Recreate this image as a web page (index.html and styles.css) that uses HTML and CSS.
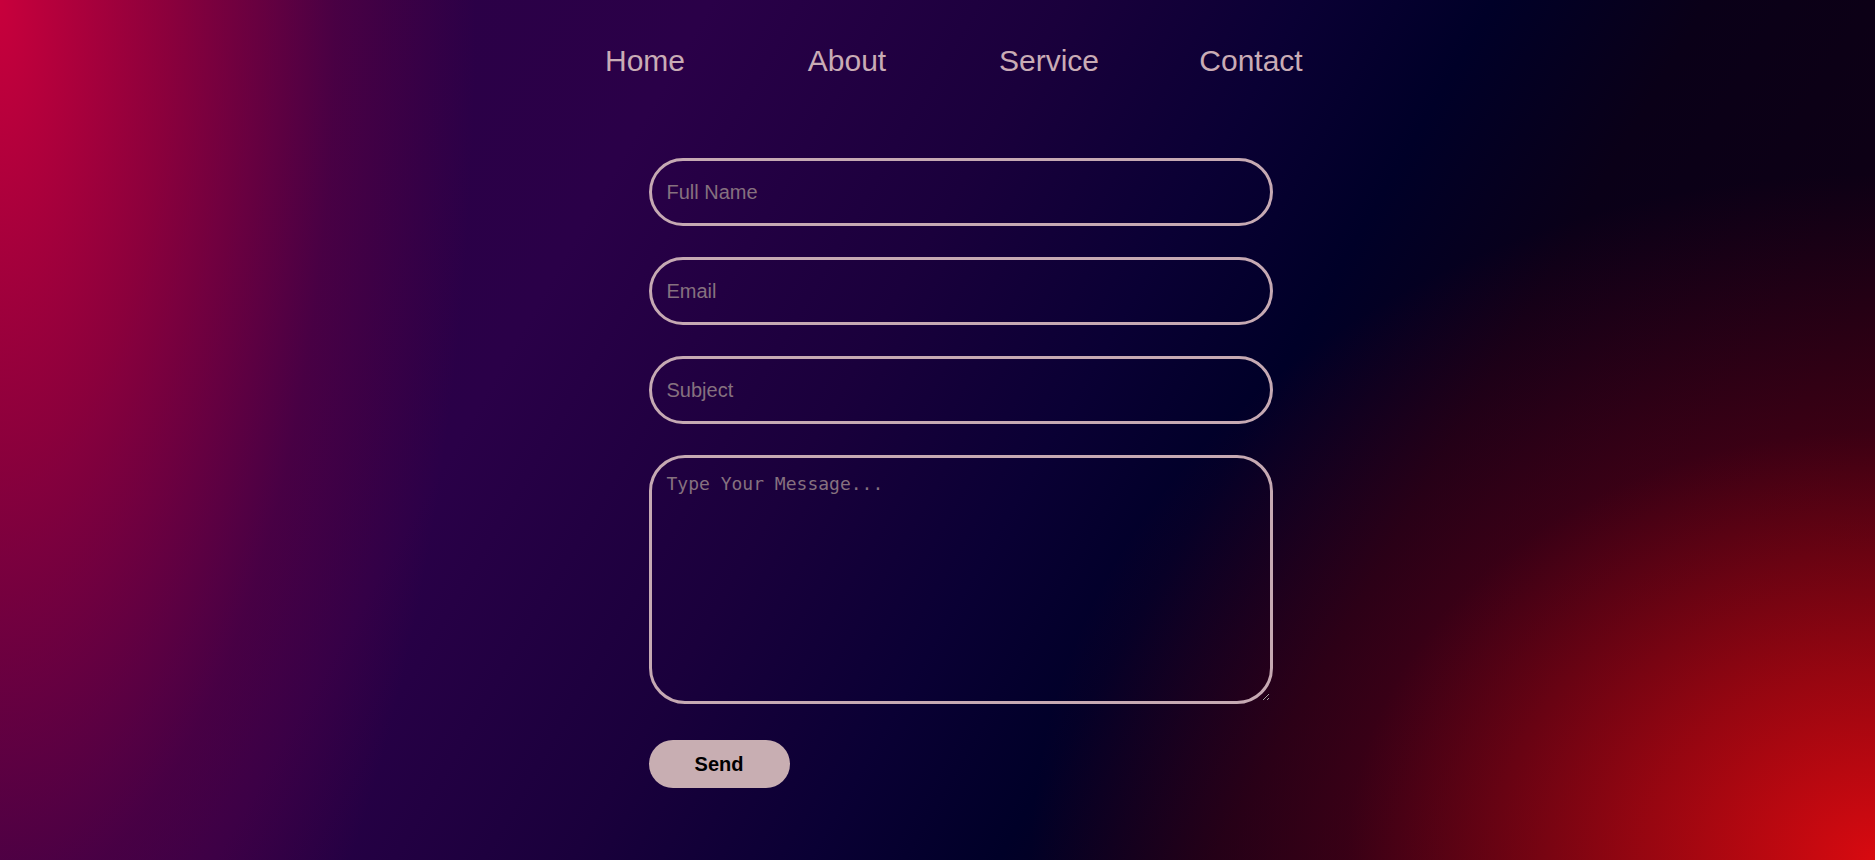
FILE: index.html
```html
<!DOCTYPE html>
<html lang="en">
<head>
<meta charset="utf-8">
<title>Contact</title>
<link rel="stylesheet" href="styles.css">
</head>
<body>
  <nav class="nav">
    <a class="nav-link" href="#">Home</a>
    <a class="nav-link" href="#">About</a>
    <a class="nav-link" href="#">Service</a>
    <a class="nav-link" href="#">Contact</a>
  </nav>
  <main class="wrap">
    <form class="contact">
      <input class="field" type="text" placeholder="Full Name">
      <input class="field" type="email" placeholder="Email">
      <input class="field" type="text" placeholder="Subject">
      <textarea class="message" placeholder="Type Your Message..."></textarea>
      <button class="send" type="button">Send</button>
    </form>
  </main>
</body>
</html>
```

FILE: styles.css
```css
html, body {
  margin: 0;
  padding: 0;
}

body {
  min-height: 100vh;
  font-family: "Liberation Sans", Arial, sans-serif;
  background:
    radial-gradient(ellipse 560px 1500px at 0% 0%, #c8003c 0%, rgba(190, 0, 55, 0.65) 30%, rgba(160, 0, 60, 0.25) 60%, rgba(160, 0, 60, 0) 85%),
    radial-gradient(ellipse 960px 780px at 100% 100%, #d80a10 0%, rgba(200, 8, 16, 0.72) 25%, rgba(160, 0, 20, 0.3) 55%, rgba(140, 0, 20, 0) 88%),
    linear-gradient(120deg, #2e0045 0%, #2a0048 30%, #1a003c 45%, #0a0034 55%, #000028 63%, #0a0018 72%, #120010 100%);
  background-color: #1a0030;
  overflow: hidden;
}

.nav {
  display: flex;
  justify-content: center;
  padding: 44px 0 0 21px;
}

.nav-link {
  width: 202px;
  text-align: center;
  font-size: 30px;
  line-height: 34px;
  color: #c9acb5;
  text-decoration: none;
}

.wrap {
  display: flex;
  justify-content: center;
  padding: 80px 0 0 46px;
}

.contact {
  width: 624px;
  display: flex;
  flex-direction: column;
  gap: 31px;
}

.field,
.message {
  box-sizing: border-box;
  width: 100%;
  margin: 0;
  background: transparent;
  border: 3px solid #c6a9b3;
  color: #c9acb5;
  outline: none;
}

.field {
  height: 68px;
  border-radius: 34px;
  padding: 0 15px;
  font-family: "Liberation Sans", Arial, sans-serif;
  font-size: 20px;
}

.message {
  height: 249px;
  border-radius: 36px;
  padding: 15px;
  font-family: "DejaVu Sans Mono", monospace;
  font-size: 18px;
  resize: vertical;
}

.field::placeholder,
.message::placeholder {
  color: #86717f;
  opacity: 1;
}

.send {
  align-self: flex-start;
  margin-top: 5px;
  width: 141px;
  height: 48px;
  border: none;
  border-radius: 24px;
  background: #c8aeb2;
  color: #000;
  font-family: "Liberation Sans", Arial, sans-serif;
  font-weight: bold;
  font-size: 20px;
  cursor: pointer;
}
```
